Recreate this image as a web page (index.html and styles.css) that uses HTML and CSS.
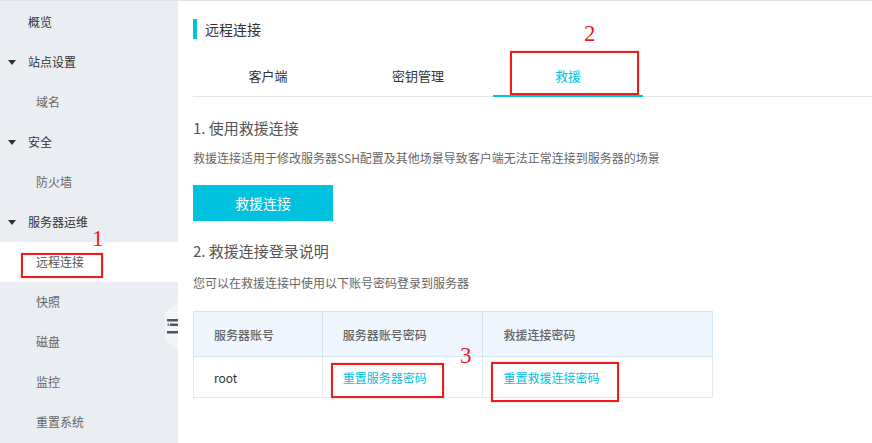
FILE: index.html
```html
<!DOCTYPE html>
<html lang="zh-CN">
<head>
<meta charset="utf-8">
<title>远程连接</title>
<link rel="stylesheet" href="styles.css">
</head>
<body>
<div class="page">
  <aside class="sidebar">
    <div class="nav-item top">概览</div>
    <div class="nav-item top"><span class="caret"></span>站点设置</div>
    <div class="nav-item sub">域名</div>
    <div class="nav-item top"><span class="caret"></span>安全</div>
    <div class="nav-item sub">防火墙</div>
    <div class="nav-item top"><span class="caret"></span>服务器运维</div>
    <div class="nav-item sub active">远程连接<span class="mark mark-1"></span><span class="num num-1">1</span></div>
    <div class="nav-item sub">快照</div>
    <div class="nav-item sub">磁盘</div>
    <div class="nav-item sub">监控</div>
    <div class="nav-item sub">重置系统</div>
  </aside>
  <div class="toggle">
    <svg width="11" height="15" viewBox="0 0 11 15">
      <rect x="0" y="0" width="11" height="2.5" fill="#4b5563"/>
      <rect x="3" y="4.5" width="8" height="2.5" fill="#4b5563"/>
      <rect x="0.5" y="4.5" width="1.8" height="2.5" fill="#3b8fd9"/>
      <rect x="0" y="12" width="11" height="2.5" fill="#4b5563"/>
    </svg>
  </div>
  <main class="main">
    <div class="title">远程连接</div>
    <div class="tabs">
      <div class="tab">客户端</div>
      <div class="tab">密钥管理</div>
      <div class="tab active">救援<span class="mark mark-2"></span><span class="num num-2">2</span></div>
    </div>
    <h2 class="heading h-first">1. 使用救援连接</h2>
    <p class="desc">救援连接适用于修改服务器SSH配置及其他场景导致客户端无法正常连接到服务器的场景</p>
    <button class="btn">救援连接</button>
    <h2 class="heading h-second">2. 救援连接登录说明</h2>
    <p class="desc desc-2">您可以在救援连接中使用以下账号密码登录到服务器</p>
    <div class="table-wrap">
      <table class="info">
        <colgroup>
          <col class="c1"><col class="c2"><col class="c3">
        </colgroup>
        <thead>
          <tr><th>服务器账号</th><th>服务器账号密码</th><th>救援连接密码</th></tr>
        </thead>
        <tbody>
          <tr><td>root</td><td><a class="link">重置服务器密码</a></td><td><a class="link">重置救援连接密码</a></td></tr>
        </tbody>
      </table>
      <span class="mark mark-3a"></span>
      <span class="mark mark-3b"></span>
      <span class="num num-3">3</span>
    </div>
  </main>
</div>
</body>
</html>
```

FILE: styles.css
```css
* { box-sizing: border-box; }
html, body {
  margin: 0;
  padding: 0;
  width: 872px;
  height: 443px;
  overflow: hidden;
  background: #fff;
  font-family: "Noto Sans CJK SC", "Noto Sans", sans-serif;
}
.page {
  position: relative;
  display: flex;
  height: 443px;
  border-top: 1px solid #dfe4ea;
}
.sidebar {
  width: 178px;
  flex: none;
  background: #eaedf1;
  padding-top: 1px;
}
.nav-item {
  position: relative;
  height: 40px;
  line-height: 40px;
  font-size: 12px;
  display: flex;
  align-items: center;
}
.nav-item.top {
  color: #333;
  padding-left: 28px;
}
.nav-item.sub {
  color: #666;
  padding-left: 36px;
}
.nav-item.active {
  background: #fff;
  color: #555;
}
.caret {
  position: absolute;
  left: 8px;
  top: 18px;
  width: 0;
  height: 0;
  border-left: 4.5px solid transparent;
  border-right: 4.5px solid transparent;
  border-top: 5px solid #333;
}
.mark {
  position: absolute;
  border: 2px solid #ee1c1c;
  box-shadow: 0 0 1px rgba(200, 0, 0, 0.5);
}
.num {
  position: absolute;
  color: #ee1c1c;
  font-family: "Liberation Serif", serif;
  font-size: 23px;
  line-height: 23px;
}
.mark-1 { left: 21px; top: 11px; width: 82px; height: 25px; }
.num-1 { left: 92px; top: -15px; }
.toggle {
  position: absolute;
  left: 165px;
  top: 301px;
  width: 13px;
  height: 48px;
  background: #f4f5f7;
  clip-path: polygon(100% 0, 100% 100%, 0 78%, 0 22%);
  display: flex;
  align-items: center;
  justify-content: flex-end;
}
.toggle svg { display: block; }
.main {
  flex: 1;
  padding-left: 15px;
}
.title {
  margin-top: 18px;
  height: 20px;
  line-height: 20px;
  border-left: 4px solid #00c1de;
  padding-left: 8px;
  font-size: 14px;
  color: #333;
}
.tabs {
  margin-top: 17px;
  display: flex;
  border-bottom: 1px solid #e1e6eb;
}
.tab {
  position: relative;
  width: 150px;
  height: 40px;
  line-height: 40px;
  text-align: center;
  font-size: 13px;
  color: #333;
}
.tab.active { color: #00c1de; }
.tab.active::after {
  content: "";
  position: absolute;
  left: 0;
  right: 0;
  bottom: -1px;
  height: 2px;
  background: #00c1de;
}
.mark-2 { left: 17px; top: -5px; width: 129px; height: 44px; }
.num-2 { left: 91px; top: -34px; }
.heading {
  margin: 0;
  font-size: 15px;
  font-weight: normal;
  line-height: 20px;
  color: #555;
}
.h-first { margin-top: 21px; }
.h-second { margin-top: 20px; }
.desc {
  margin: 10px 0 0;
  font-size: 12px;
  line-height: 20px;
  color: #666;
}
.desc-2 { margin-top: 12px; }
.btn {
  display: block;
  margin-top: 17px;
  width: 140px;
  height: 36px;
  border: none;
  background: #00c1de;
  color: #fff;
  font-family: inherit;
  font-size: 14px;
  padding: 0;
}
.table-wrap {
  position: relative;
  margin-top: 18px;
  width: 520px;
}
.info {
  width: 520px;
  border-collapse: collapse;
  font-size: 12px;
}
.c1 { width: 129px; }
.c2 { width: 161px; }
.c3 { width: 230px; }
.info th {
  height: 45px;
  background: #eff6fd;
  border: 1px solid #d5e5f5;
  text-align: left;
  padding: 0 0 0 20px;
  font-weight: 500;
  color: #666;
}
.info td {
  height: 41px;
  border: 1px solid #e3e8ee;
  padding: 0 0 0 20px;
  color: #333;
}
.link { color: #00c1de; text-decoration: none; }
.mark-3a { left: 138px; top: 52px; width: 113px; height: 35px; }
.mark-3b { left: 298px; top: 51px; width: 128px; height: 40px; }
.num-3 { left: 267px; top: 33px; }
```
